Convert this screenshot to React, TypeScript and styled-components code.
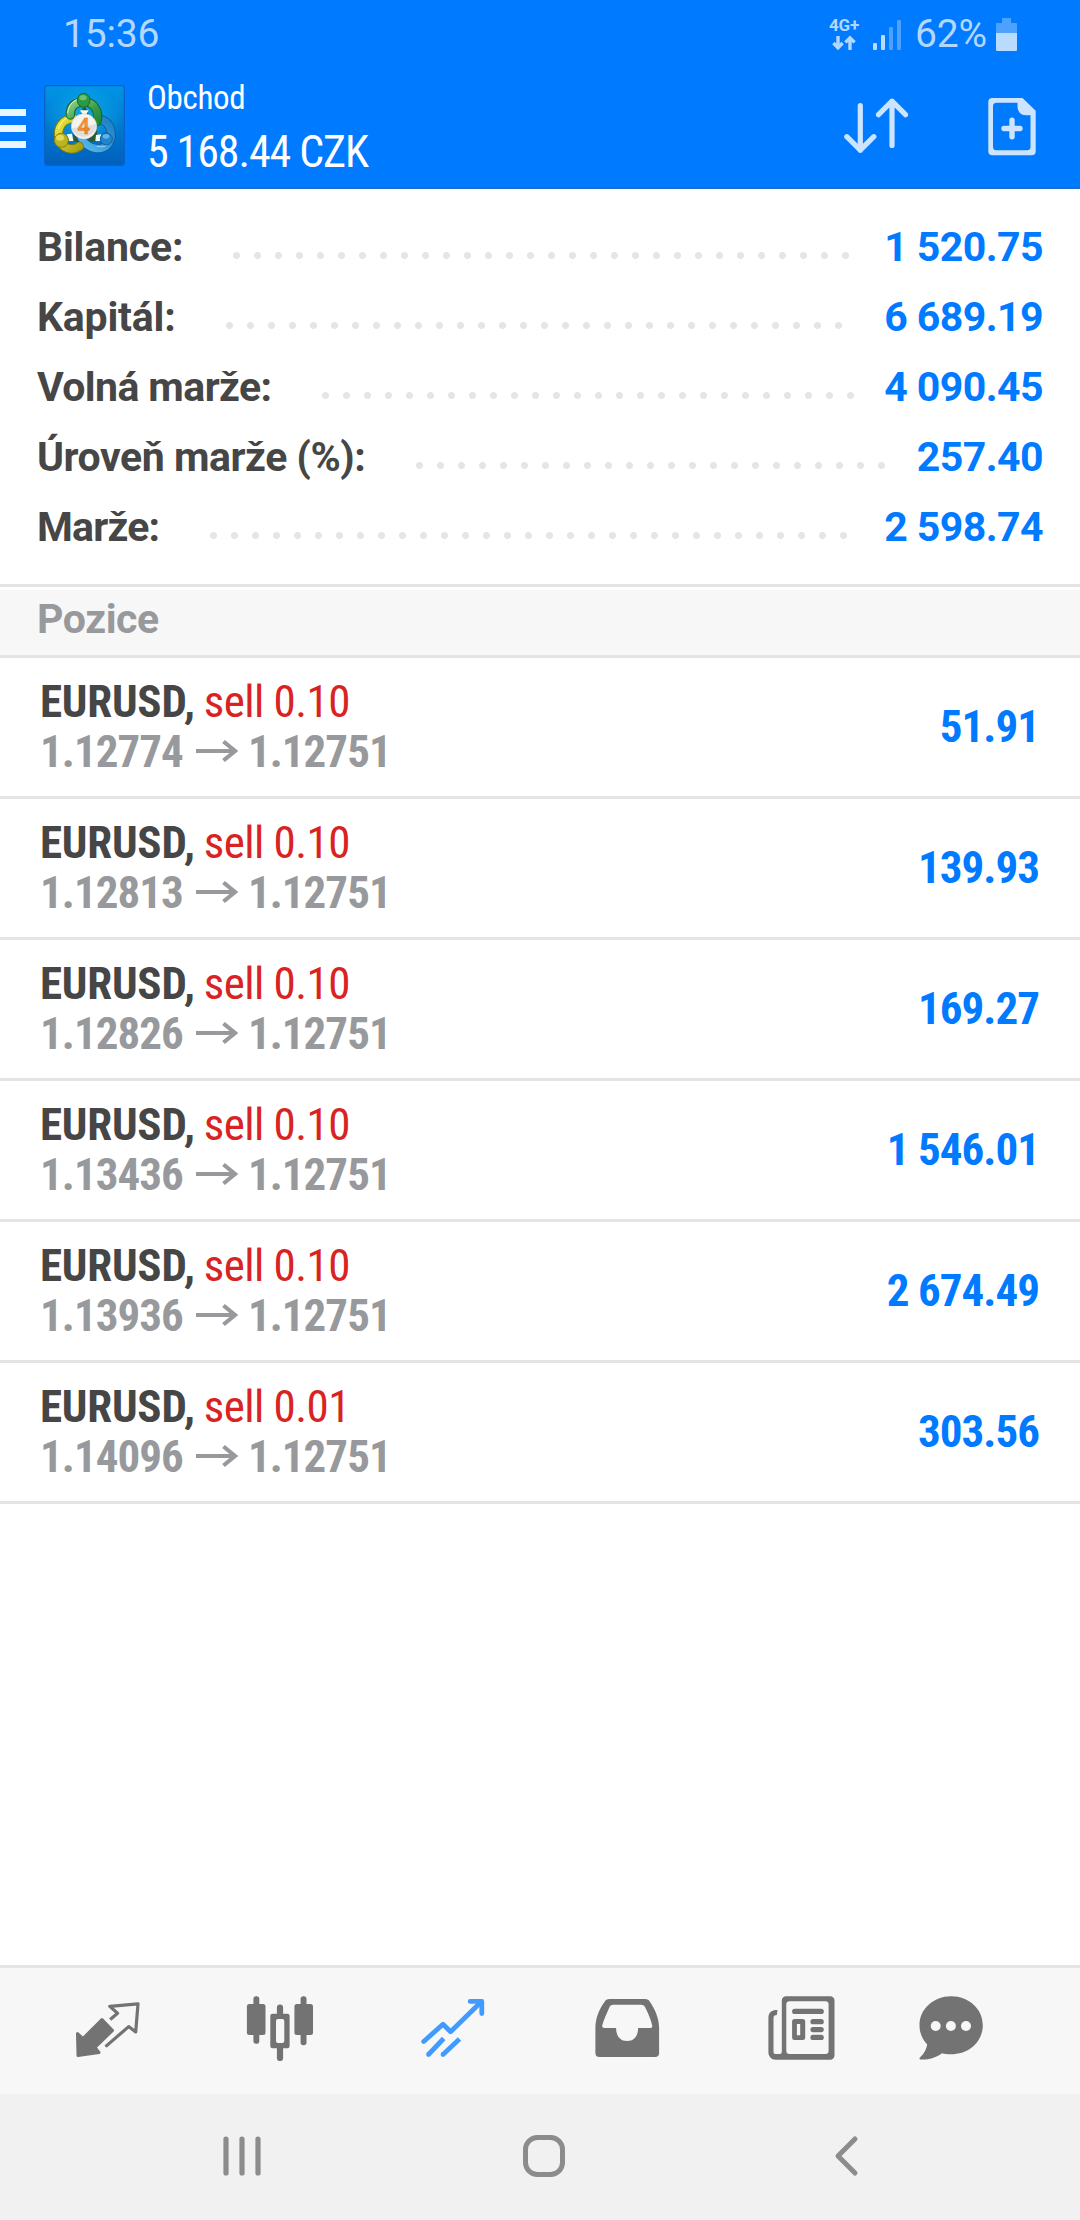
import React from "react";
import styled, { createGlobalStyle } from "styled-components";

const ROBOTO = `Roboto, "Open Sans", sans-serif`;
const CONDENSED = `"Roboto Condensed", Roboto, sans-serif`;
const BLUE = "#007aff";
const RULE = "#e4e4e4";
const ICON = "#737373";

const GlobalStyle = createGlobalStyle`
  * { box-sizing: border-box; }
  body { margin: 0; background: #fff; font-family: ${ROBOTO}; }
`;

const Screen = styled.div`
  display: flex;
  flex-direction: column;
  width: 1080px;
  height: 2220px;
  overflow: hidden;
  background: #fff;
`;

const StatusBar = styled.div`
  display: flex;
  align-items: center;
  justify-content: space-between;
  height: 69px;
  padding: 0 63px;
  background: ${BLUE};
  color: #b3d7ff;
  font-size: 39px;
  letter-spacing: -0.15px;
  line-height: 69px;
`;

const StatusRight = styled.div`
  display: flex;
  align-items: center;
`;

const Network = styled.div`
  display: flex;
  flex-direction: column;
  align-items: center;
  gap: 3px;
  width: 32px;
  margin-right: 13px;
  font-size: 17px;
  font-weight: 700;
  line-height: 13px;
`;

const Percent = styled.span`
  margin: 0 9px 0 14px;
`;

const AppBar = styled.header`
  display: flex;
  align-items: center;
  height: 120px;
  background: ${BLUE};
  border-bottom: 2px solid #1c6dcd;
`;

const Burger = styled.div`
  display: flex;
  flex-direction: column;
  gap: 9px;
  width: 26px;
  margin-right: 18px;
`;

const BurgerLine = styled.span`
  height: 7px;
  background: #ebf5ff;
`;

const LogoImage = styled.svg`
  width: 81px;
  height: 81px;
  margin-bottom: 5px;
`;

const Titles = styled.div`
  display: flex;
  flex-direction: column;
  flex: 1;
  align-self: flex-start;
  padding: 5px 0 0 22px;
  color: #fff;
  font-family: ${CONDENSED};
`;

const Title = styled.span`
  font-size: 33px;
  letter-spacing: -0.3px;
  line-height: 47px;
`;

const Balance = styled.span`
  font-size: 44px;
  letter-spacing: -1.1px;
  line-height: 62px;
`;

const Actions = styled.div`
  display: flex;
  align-items: center;
  gap: 76px;
  padding-right: 40px;
`;

const Summary = styled.section`
  display: flex;
  flex-direction: column;
  height: 395px;
  padding: 23px 37px 0 37px;
`;

const SummaryRow = styled.div`
  display: flex;
  align-items: center;
  height: 70px;
  font-size: 41px;
  font-weight: 700;
  letter-spacing: -0.55px;
  line-height: 70px;
`;

const SummaryLabel = styled.span<{ $width: number; $tracking: number }>`
  width: ${(p) => p.$width}px;
  color: #464646;
  letter-spacing: ${(p) => p.$tracking}px;
  white-space: nowrap;
`;

const Leader = styled.span<{ $dots: number }>`
  width: ${(p) => p.$dots * 21}px;
  height: 7px;
  margin-top: 17px;
  background: radial-gradient(circle at 3.5px 3.5px, #e5e5e5 3.1px, transparent 3.9px) 0 0 / 21px 7px repeat-x;
`;

const SummaryValue = styled.span`
  margin-left: auto;
  color: ${BLUE};
`;

const SectionTitle = styled.h2`
  height: 74px;
  margin: 0;
  padding: 0 37px;
  border-top: 3px solid ${RULE};
  border-bottom: 3px solid ${RULE};
  background: linear-gradient(#fff 3px, #f7f7f7 3px);
  color: #98999c;
  font-size: 41px;
  font-weight: 700;
  letter-spacing: -0.4px;
  line-height: 64px;
`;

const PositionRow = styled.div`
  display: flex;
  align-items: center;
  justify-content: space-between;
  height: 141px;
  padding: 0 41px 0 40px;
  border-bottom: 3px solid ${RULE};
  font-family: ${CONDENSED};
  font-size: 45px;
  line-height: 50px;
`;

const Deal = styled.div`
  display: flex;
  flex-direction: column;
`;

const Headline = styled.div`
  display: flex;
  gap: 9px;
  color: #464646;
  font-weight: 700;
  letter-spacing: -0.25px;
`;

const Side = styled.span`
  color: #d92323;
  font-weight: 400;
  letter-spacing: -0.55px;
`;

const Prices = styled.div`
  display: flex;
  align-items: center;
  color: #98999c;
  font-weight: 700;
  letter-spacing: -0.95px;
`;

const PriceArrow = styled.svg`
  width: 44px;
  height: 24px;
  margin: 0 8px 3px 13px;
`;

const Profit = styled.span`
  color: ${BLUE};
  font-weight: 700;
  letter-spacing: -0.95px;
`;

const Spacer = styled.div`
  flex: 1;
`;

const TabBar = styled.nav`
  display: flex;
  align-items: center;
  height: 129px;
  padding-left: 21px;
  border-top: 3px solid #e5e5e5;
  background: #f7f7f7;
`;

const Tab = styled.div<{ $width: number }>`
  display: flex;
  justify-content: center;
  width: ${(p) => p.$width}px;
`;

const SystemBar = styled.div`
  display: flex;
  align-items: center;
  height: 126px;
  padding-left: 91px;
  background: #f1f1f1;
`;

const SystemKey = styled.div`
  display: flex;
  justify-content: center;
  width: 302px;
`;

const summary = [
  { label: "Bilance:", value: "1 520.75", start: 196, tracking: -0.2, dots: 30 },
  { label: "Kapitál:", value: "6 689.19", start: 189, tracking: -0.2, dots: 30 },
  { label: "Volná marže:", value: "4 090.45", start: 285, tracking: -0.6, dots: 26 },
  { label: "Úroveň marže (%):", value: "257.40", start: 379, tracking: -0.45, dots: 23 },
  { label: "Marže:", value: "2 598.74", start: 173, tracking: -0.8, dots: 31 },
];

const positions = [
  { lot: "0.10", open: "1.12774", now: "1.12751", profit: "51.91" },
  { lot: "0.10", open: "1.12813", now: "1.12751", profit: "139.93" },
  { lot: "0.10", open: "1.12826", now: "1.12751", profit: "169.27" },
  { lot: "0.10", open: "1.13436", now: "1.12751", profit: "1 546.01" },
  { lot: "0.10", open: "1.13936", now: "1.12751", profit: "2 674.49" },
  { lot: "0.01", open: "1.14096", now: "1.12751", profit: "303.56" },
];

const Logo = () => (
  <LogoImage viewBox="0 0 243 243">
    <defs>
      <linearGradient id="tile" x1="0" y1="0" x2="0" y2="1">
        <stop offset="0" stopColor="#0095e6" />
        <stop offset="0.5" stopColor="#0079cf" />
        <stop offset="1" stopColor="#0060bd" />
      </linearGradient>
      <radialGradient id="glow" cx="0.5" cy="0.5" r="0.5">
        <stop offset="0" stopColor="#12b4ee" stopOpacity="0.8" />
        <stop offset="1" stopColor="#12b4ee" stopOpacity="0" />
      </radialGradient>
      <linearGradient id="green" x1="0" y1="0" x2="1" y2="1">
        <stop offset="0" stopColor="#8fd08a" />
        <stop offset="0.6" stopColor="#3a9d45" />
        <stop offset="1" stopColor="#1f8a35" />
      </linearGradient>
      <linearGradient id="yellow" x1="0" y1="0" x2="1" y2="1">
        <stop offset="0" stopColor="#ece83c" />
        <stop offset="1" stopColor="#a8a114" />
      </linearGradient>
      <linearGradient id="sky" x1="0" y1="1" x2="1" y2="0">
        <stop offset="0" stopColor="#57b8ef" />
        <stop offset="1" stopColor="#1a7fc4" />
      </linearGradient>
      <linearGradient id="digit" x1="0" y1="0" x2="0" y2="1">
        <stop offset="0" stopColor="#f9a646" />
        <stop offset="1" stopColor="#ee7b22" />
      </linearGradient>
    </defs>
    <rect x="2" y="2" width="239" height="239" rx="9" fill="url(#tile)" stroke="#0a62c4" strokeWidth="4" />
    <ellipse cx="121" cy="95" rx="118" ry="95" fill="url(#glow)" />
    <path d="M86 140L121 60L160 140L155 170L90 170Z" fill="#2a5b2e" />
    <path d="M108 76L134 76L127 88L115 88ZM68 148L84 146L88 168L76 168ZM156 150L172 148L168 168L154 168Z" fill="#f3f8f0" />
    <g fill="none" strokeLinecap="round">
      <path d="M171 104C202 112 208 150 195 172C182 200 132 198 112 158" stroke="#0d5f9f" strokeWidth="28" />
      <path d="M171 104C202 112 208 150 195 172C182 200 132 198 112 158" stroke="url(#sky)" strokeWidth="22" />
      <path d="M160 184C178 188 190 182 198 172" stroke="#9bd8fa" strokeWidth="3" />
      <path d="M90 101C54 101 37 130 46 164C54 192 86 199 106 184" stroke="#827b0c" strokeWidth="28" />
      <path d="M90 101C54 101 37 130 46 164C54 192 86 199 106 184" stroke="url(#yellow)" strokeWidth="22" />
      <path d="M44 130C50 110 64 98 84 95" stroke="#fbfab0" strokeWidth="3" />
      <path d="M79 90C77 60 100 50 122 50C150 52 167 80 159 110" stroke="#14652a" strokeWidth="28" />
      <path d="M79 90C77 60 100 50 122 50C150 52 167 80 159 110" stroke="url(#green)" strokeWidth="22" />
      <path d="M71 84C73 62 86 48 99 44" stroke="#d6f2cf" strokeWidth="3" />
    </g>
    <ellipse cx="119" cy="46" rx="19" ry="21" fill="#2c9a41" stroke="#176b2b" strokeWidth="3" />
    <ellipse cx="117" cy="38" rx="11" ry="8" fill="#7fcc86" opacity="0.75" />
    <circle cx="52" cy="166" r="21" fill="#bcb521" stroke="#857e0e" strokeWidth="3" />
    <ellipse cx="48" cy="158" rx="12" ry="9" fill="#e9e56c" opacity="0.8" />
    <circle cx="187" cy="162" r="18" fill="#2284cb" stroke="#0e60a3" strokeWidth="3" />
    <ellipse cx="186" cy="154" rx="10" ry="7" fill="#6cc0f0" opacity="0.8" />
    <circle cx="120" cy="124" r="38" fill="#f4f3f2" stroke="#cfd3cf" strokeWidth="2" />
    <path d="M83 130A38 38 0 0 0 157 118Z" fill="#dedede" />
    <text x="119" y="148" textAnchor="middle" fontFamily="Roboto, sans-serif" fontSize="68" fontWeight="600" fill="url(#digit)" stroke="#d9701c" strokeWidth="1">4</text>
  </LogoImage>
);

export default function App() {
  return (
    <Screen>
      <GlobalStyle />
      <StatusBar>
        <span>15:36</span>
        <StatusRight>
          <Network>
            4G+
            <svg width="24" height="16" viewBox="0 0 24 16" fill="none" stroke="#b3d7ff" strokeWidth="3.4">
              <path d="M6 1V12M1.4 8L6 12.8L10.600 8M18 15V4M13.400 7.400L18 2.800L22.600 7.400" />
            </svg>
          </Network>
          <svg width="28" height="30" viewBox="0 0 28 30">
            <rect x="0" y="23" width="4" height="7" rx="1" fill="#b8dbff" />
            <rect x="8" y="15" width="4" height="15" rx="1" fill="#b8dbff" />
            <rect x="16" y="7" width="4" height="23" rx="1" fill="#4da2ff" />
            <rect x="24" y="0" width="4" height="30" rx="1" fill="#4da2ff" />
          </svg>
          <Percent>62%</Percent>
          <svg width="21" height="33" viewBox="0 0 21 33">
            <path d="M6 0h9v5h5a1 1 0 0 1 1 1v9H0V6a1 1 0 0 1 1-1h5z" fill="#4da2ff" />
            <path d="M0 15h21v17a1 1 0 0 1-1 1H1a1 1 0 0 1-1-1z" fill="#b8dbff" />
          </svg>
        </StatusRight>
      </StatusBar>

      <AppBar>
        <Burger>
          <BurgerLine />
          <BurgerLine />
          <BurgerLine />
        </Burger>
        <Logo />
        <Titles>
          <Title>Obchod</Title>
          <Balance>5 168.44 CZK</Balance>
        </Titles>
        <Actions>
          <svg width="68" height="60" viewBox="0 0 68 60" fill="none" stroke="#cce4ff" strokeWidth="5.2" strokeLinecap="round" strokeLinejoin="round">
            <path d="M16.300 7.600V52.200M2.800 38.700L16.300 52.200L29.800 38.700M48 47.500V3.200M34.500 16.700L48 3.200L61.500 16.700" />
          </svg>
          <svg width="52" height="60" viewBox="2 1.7 52 60">
            <path fillRule="evenodd" fill="#cce4ff" d="M7 1.700H36.500L49.700 14.500V55a4 4 0 0 1-4 4H6.300a4 4 0 0 1-4-4V5.700a4 4 0 0 1 4-4zM10.500 6.500a3.500 3.500 0 0 0-3.500 3.500V50.500a3.500 3.500 0 0 0 3.500 3.500H41a3.500 3.500 0 0 0 3.500-3.500V19H39.500a8 8 0 0 1-8-8V6.500z" />
            <path d="M26 24V40.500M18 32.200H34" stroke="#cce4ff" strokeWidth="5.400" strokeLinecap="round" />
          </svg>
        </Actions>
      </AppBar>

      <Summary>
        {summary.map((s) => (
          <SummaryRow key={s.label}>
            <SummaryLabel $width={s.start} $tracking={s.tracking}>{s.label}</SummaryLabel>
            <Leader $dots={s.dots} />
            <SummaryValue>{s.value}</SummaryValue>
          </SummaryRow>
        ))}
      </Summary>

      <SectionTitle>Pozice</SectionTitle>

      {positions.map((p) => (
        <PositionRow key={p.open}>
          <Deal>
            <Headline>
              EURUSD, <Side>sell {p.lot}</Side>
            </Headline>
            <Prices>
              {p.open}
              <PriceArrow viewBox="0 0 44 24" fill="none" stroke="#98999c" strokeWidth="4.200">
                <path d="M0 12H38.500M27.500 2.500L39 12L27.500 21.500" />
              </PriceArrow>
              {p.now}
            </Prices>
          </Deal>
          <Profit>{p.profit}</Profit>
        </PositionRow>
      ))}

      <Spacer />

      <TabBar>
        <Tab $width={173.4}>
          <svg width="80" height="80" viewBox="0 0 80 80" strokeLinejoin="round">
            <path d="M34 28.500L44.500 39.500L27 56.500L31 61.500L10 64.500L9.500 42.500L15 47.500Z" fill={ICON} stroke={ICON} strokeWidth="3" />
            <path d="M42.200 28.500L49.600 22.200L41.800 15.400L70 12.900L67.700 41L60.700 35.600L37.500 55.600" fill="none" stroke={ICON} strokeWidth="3.200" />
          </svg>
        </Tab>
        <Tab $width={173.4}>
          <svg width="80" height="80" viewBox="0 0 80 80" fill={ICON}>
            <rect x="5.900" y="13" width="18.600" height="31" rx="2.500" />
            <rect x="12.400" y="5.300" width="5.900" height="47.400" rx="2.800" />
            <path fillRule="evenodd" d="M31.500 22.700H46.400a2.200 2.200 0 0 1 2.200 2.200V55.100a2.200 2.200 0 0 1-2.200 2.200H31.500a2.200 2.200 0 0 1-2.200-2.200V24.900a2.200 2.200 0 0 1 2.200-2.200zM37 28a2 2 0 0 0-2 2V50a2 2 0 0 0 2 2h4.300a2 2 0 0 0 2-2V30a2 2 0 0 0-2-2z" />
            <path d="M35.900 24V16.700a3.100 3.100 0 0 1 6.200 0V24zM35.900 56V67a3.100 3.100 0 0 0 6.200 0V56z" />
            <rect x="53.400" y="13" width="18.600" height="31" rx="2.500" />
            <rect x="59.600" y="5.300" width="5.900" height="49" rx="2.800" />
          </svg>
        </Tab>
        <Tab $width={173.4}>
          <svg width="80" height="80" viewBox="0 0 80 80" fill="none" stroke="#419bff" strokeWidth="4.800" strokeLinejoin="round">
            <path d="M9.700 50.500L29 33.200L36.600 40.700L67 11" strokeLinecap="round" />
            <path d="M56.200 10.400H67.800V22.500" strokeLinecap="round" />
            <path d="M29.700 47.500L14.500 63.500M45.500 48L29 63.500" />
            <path d="M14.500 63.500h.01M29 63.500h.01" strokeLinecap="round" />
          </svg>
        </Tab>
        <Tab $width={173.4}>
          <svg width="80" height="80" viewBox="0 0 80 80">
            <path fillRule="evenodd" fill={ICON} d="M21.500 8H57C59.500 8 60.800 8.800 62 11C67.500 19 71.100 28 71.100 37V62a4 4 0 0 1-4 4H11.400a4 4 0 0 1-4-4V37C7.400 27 11.500 17.500 16.500 11C17.800 8.800 19 8 21.500 8zM25.500 13.700C23 13.700 22 14.800 21.200 16.800C18.500 23 15.500 29.500 14.200 34.500C13.900 36.200 14.800 37 16.500 37H28.100C28.100 45 32 50 39.100 50C46.200 50 50.100 45 50.100 37H62C63.800 37 64.500 36.200 64.200 34.500C63 29 60.500 23 57.500 17C56.500 14.800 55.500 13.700 53 13.700z" />
          </svg>
        </Tab>
        <Tab $width={173.4}>
          <svg width="80" height="80" viewBox="0 0 80 80" fill={ICON}>
            <path fillRule="evenodd" d="M25 5.300H69.300a4.200 4.200 0 0 1 4.200 4.200V64.500a4.200 4.200 0 0 1-4.200 4.200H14.400a7 7 0 0 1-7-7V27C7.400 21.500 10.500 19 16.500 19L15.800 24C13.500 24 12.500 25 12.500 27V61a2 2 0 0 0 2 2H18.800a2 2 0 0 0 2-2V9.500a4.200 4.200 0 0 1 4.200-4.200zM28.500 10.300a3.200 3.200 0 0 0-3.200 3.200V59.800a3.200 3.200 0 0 0 3.200 3.200H64.400a3.200 3.200 0 0 0 3.200-3.200V13.500a3.200 3.200 0 0 0-3.200-3.200z" />
            <rect x="31.100" y="17.700" width="31.700" height="5.300" rx="2.600" />
            <path fillRule="evenodd" d="M33.600 28H41.700a2.500 2.500 0 0 1 2.500 2.500V46.500a2.500 2.500 0 0 1-2.500 2.500H33.600a2.500 2.500 0 0 1-2.500-2.500V30.500a2.500 2.500 0 0 1 2.500-2.500zM35.900 33V44.300H39.200V33z" />
            <rect x="49.400" y="28" width="13.400" height="5.300" rx="2.600" />
            <rect x="49.400" y="36" width="13.400" height="5.200" rx="2.600" />
            <rect x="49.400" y="43.700" width="13.400" height="5.300" rx="2.600" />
          </svg>
        </Tab>
        <Tab $width={126}>
          <svg width="80" height="80" viewBox="0 0 80 80">
            <path fill={ICON} d="M40.200 5.300C58 5.300 71.800 18 71.800 34.300C71.800 50.500 58 63.300 40.200 63.300C36.500 63.300 33.500 62.900 31 62.200C25 66.500 17 69 10 68.500C8.300 68.300 8 67.200 9.200 66.200C13.500 62.500 15.500 57.500 16.200 53.500C11.500 48.500 8.500 42 8.500 34.300C8.500 18 22.500 5.300 40.200 5.300z" />
            <circle cx="24.700" cy="35" r="5" fill="#f7f7f7" />
            <circle cx="39.900" cy="35" r="5" fill="#f7f7f7" />
            <circle cx="55" cy="35" r="5" fill="#f7f7f7" />
          </svg>
        </Tab>
      </TabBar>

      <SystemBar>
        <SystemKey>
          <svg width="44" height="44" viewBox="0 0 44 44" stroke="#8c8c8c" strokeWidth="5.200" strokeLinecap="round">
            <path d="M6 4V38M22 4V38M38 4V38" />
          </svg>
        </SystemKey>
        <SystemKey>
          <svg width="44" height="44" viewBox="0 0 44 44" fill="none" stroke="#8c8c8c" strokeWidth="5">
            <rect x="3.500" y="2.500" width="37" height="37" rx="12" />
          </svg>
        </SystemKey>
        <SystemKey>
          <svg width="44" height="44" viewBox="0 0 44 44" fill="none" stroke="#8c8c8c" strokeWidth="5" strokeLinecap="round" strokeLinejoin="round">
            <path d="M31 4L14 21L31 38" />
          </svg>
        </SystemKey>
      </SystemBar>
    </Screen>
  );
}
